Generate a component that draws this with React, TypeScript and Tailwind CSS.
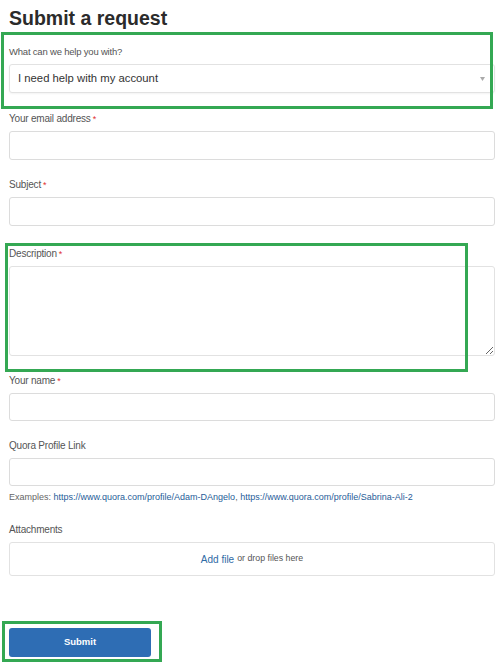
import type { ReactNode } from 'react';

const FONT = { fontFamily: '"Liberation Sans", Arial, sans-serif' };

function Label({
  children,
  required,
  size = 'text-[10px]',
}: {
  children: ReactNode;
  required?: boolean;
  size?: string;
}): JSX.Element {
  return (
    <div className={`mb-[5px] leading-[14px] tracking-[-0.2px] text-[#555] ${size}`}>
      {children}
      {required ? <span className="ml-[2px] align-top text-[9px] text-[#e0312f]">*</span> : null}
    </div>
  );
}

function TextInput({ h }: { h: string }): JSX.Element {
  return (
    <input
      type="text"
      className={`block w-full rounded-[3px] border border-[#dcdcdc] bg-white outline-none ${h}`}
    />
  );
}

export default function App(): JSX.Element {
  return (
    <div className="relative h-[664px] w-[498px] overflow-hidden bg-white" style={FONT}>
      <form className="w-[495px] pl-[9px]" onSubmit={(e) => e.preventDefault()}>
        <h1 className="pt-[6px] text-[19.5px] font-bold leading-[24px] text-[#2b2b2b]">Submit a request</h1>

        <div className="mt-[15px]">
          <Label size="text-[9.5px]">What can we help you with?</Label>
          <div className="flex h-[29px] items-center justify-between rounded-[3px] border border-[#e2e2e2] bg-white pl-[8px] pr-[9px] shadow-[0_1px_2px_rgba(0,0,0,0.05)]">
            <span className="text-[11.3px] text-[#333]">I need help with my account</span>
            <svg width="5" height="4" viewBox="0 0 5 4" aria-hidden="true">
              <path d="M0 0 L5 0 L2.5 4 Z" fill="#aaa" />
            </svg>
          </div>
        </div>

        <div className="mt-[19px]">
          <Label required>Your email address</Label>
          <TextInput h="h-[29px]" />
        </div>

        <div className="mt-[18px]">
          <Label required>Subject</Label>
          <TextInput h="h-[29px]" />
        </div>

        <div className="mt-[21px]">
          <Label required>Description</Label>
          <textarea className="block h-[90px] w-full rounded-[3px] border border-[#e2e2e2] bg-white outline-none" />
        </div>

        <div className="mt-[18px]">
          <Label required>Your name</Label>
          <TextInput h="h-[28px]" />
        </div>

        <div className="mt-[18px]">
          <Label>Quora Profile Link</Label>
          <TextInput h="h-[28px]" />
          <p className="mt-[5px] text-[9px] leading-[12px] text-[#666]">
            Examples:{' '}
            <a className="text-[#1f5d99]">https://www.quora.com/profile/Adam-DAngelo</a>,{' '}
            <a className="text-[#1f5d99]">https://www.quora.com/profile/Sabrina-Ali-2</a>
          </p>
        </div>

        <div className="mt-[20px]">
          <Label>Attachments</Label>
          <div className="flex h-[34px] items-center justify-center rounded-[3px] border border-[#e2e2e2] bg-white">
            <span className="text-[10px] text-[#2f6aa5]">Add file</span>
            <span className="ml-[3px] text-[8.8px] text-[#555]">or drop files here</span>
          </div>
        </div>

        <button
          type="submit"
          className="mt-[52px] block h-[29px] w-[142px] rounded-[3px] bg-[#2e6db4] text-[9.5px] font-bold text-white"
        >
          Submit
        </button>
      </form>

      {/* annotation frames drawn over the form */}
      <div className="pointer-events-none absolute left-[1px] top-[32px] h-[77px] w-[492px] border-[3px] border-[#34a853]" />
      <div className="pointer-events-none absolute left-[5px] top-[243px] h-[129px] w-[463px] border-[3px] border-[#34a853]" />
      <div className="pointer-events-none absolute left-[2px] top-[621px] h-[41px] w-[160px] border-[3px] border-[#34a853]" />
    </div>
  );
}
